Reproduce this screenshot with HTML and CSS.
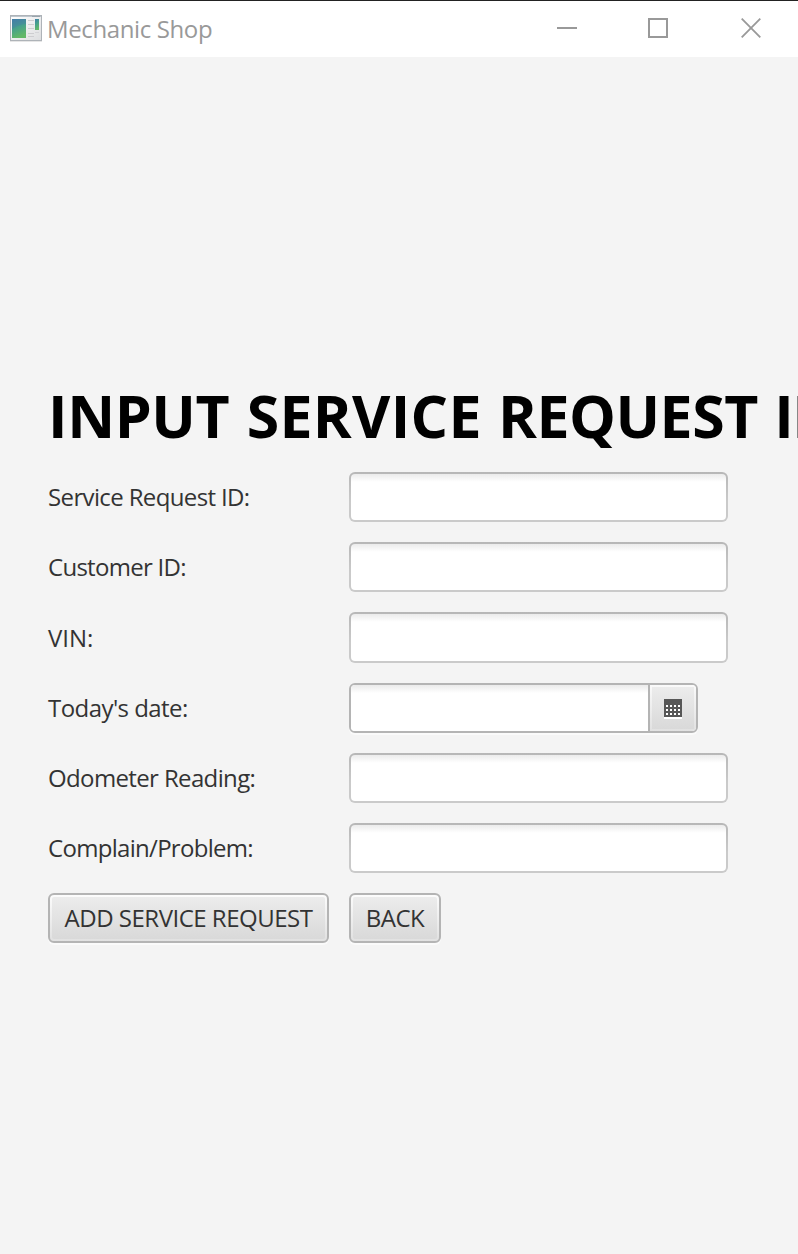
FILE: index.html
```
<!DOCTYPE html>
<html lang="en">
<head>
<meta charset="utf-8">
<title>Mechanic Shop</title>
<link rel="stylesheet" href="styles.css">
</head>
<body>
<div class="window">
  <header class="titlebar">
    <svg class="app-icon" width="32" height="27" viewBox="0 0 32 27">
      <defs>
        <linearGradient id="pane" x1="0" y1="0" x2="0.3" y2="1">
          <stop offset="0" stop-color="#3f7fa8"/><stop offset="0.5" stop-color="#46a08c"/><stop offset="1" stop-color="#62b868"/>
        </linearGradient>
        <linearGradient id="frame" x1="0" y1="0" x2="1" y2="1">
          <stop offset="0" stop-color="#fff"/><stop offset="1" stop-color="#dcdddf"/>
        </linearGradient>
      </defs>
      <rect x="0.5" y="0.5" width="31" height="25" fill="url(#frame)" stroke="#aeb3b8"/>
      <path d="M1 1.5h30" stroke="#bcc5cc"/>
      <path d="M22 1.5h8" stroke="#98a4ad"/>
      <rect x="2" y="4" width="14" height="19" fill="url(#pane)"/>
      <path d="M2 14Q10 9 16 9V4H2z" fill="#4779a8" opacity=".35"/>
      <path d="M18 5.500h6M18 9.500h6M18 13.500h6M18 18.500h6M18 21.500h6" stroke="#cdcdd0"/>
      <rect x="25" y="4" width="4" height="11" fill="url(#pane)"/>
      <path d="M25 17.500h4" stroke="#d4d4d8"/>
      <path d="M0 26.500h32" stroke="#e6e6e6"/>
    </svg>
    <span class="title">Mechanic Shop</span>
    <div class="controls">
      <svg width="20" height="20" viewBox="0 0 20 20"><path d="M0 10h20" stroke="#999" stroke-width="2"/></svg>
      <svg width="20" height="20" viewBox="0 0 20 20"><rect x="1" y="1" width="18" height="18" fill="none" stroke="#999" stroke-width="2"/></svg>
      <svg width="20" height="20" viewBox="0 0 20 20"><path d="M.7.700l18.600 18.600M19.300.700L.7 19.300" stroke="#999" stroke-width="1.800"/></svg>
    </div>
  </header>
  <main class="content">
    <h1 class="heading"><span class="w-input">INPUT</span> <span class="w-service">SERVICE</span> <span class="w-request">REQUEST</span> <span class="w-last">IN</span></h1>
    <form class="form">
      <label class="label l-service" for="sr">Service Request ID:</label><input class="field" id="sr">
      <label class="label l-customer" for="cu">Customer ID:</label><input class="field" id="cu">
      <label class="label l-vin" for="vin">VIN:</label><input class="field" id="vin">
      <label class="label l-date" for="date">Today's date:</label>
      <div class="date">
        <input class="date-input" id="date">
        <button class="date-button" type="button" aria-label="Choose date">
          <svg width="18" height="20" viewBox="0 0 18 20">
            <path d="M0 18h18v2H0z" fill="#fff"/>
            <path d="M0 0h18v18H0z" fill="#575757"/>
            <path d="M2 7h14M2 11h14M2 15h14" stroke="#fff" stroke-width="2" stroke-dasharray="2 2"/>
          </svg>
        </button>
      </div>
      <label class="label l-odometer" for="od">Odometer Reading:</label><input class="field" id="od">
      <label class="label l-problem" for="pr">Complain/Problem:</label><input class="field" id="pr">
      <button class="button add" type="button"><span>ADD SERVICE REQUEST</span></button>
      <button class="button back" type="button"><span>BACK</span></button>
    </form>
  </main>
</div>
</body>
</html>
```
FILE: styles.css
```
* { box-sizing: border-box; }
body { margin: 0; font-family: "Open Sans", "Noto Sans", sans-serif; }
.window { width: 798px; height: 1254px; overflow: hidden; background: #f4f4f4; }
.titlebar {
  display: flex; align-items: center; height: 57px; padding: 0 37px 3px 10px;
  border-top: 1px solid #222; background: #fff;
}
.app-icon { flex: none; margin-top: 2px; }
.title { margin-left: 5px; padding-top: 3px; font-size: 24px; line-height: 32px; color: #999; white-space: nowrap; letter-spacing: -0.38px; }
.controls { display: flex; margin-left: auto; gap: 71px; }
.controls svg { display: block; }
.controls svg:last-child { margin-left: 2px; }
.content { padding: 318px 0 0 48px; }
.heading { margin: 0 0 17px; height: 80px; font-size: 59px; line-height: 80px; font-weight: 700; white-space: nowrap; color: #000; }
.w-input { letter-spacing: -0.4px; margin-right: 2px; }
.w-service { letter-spacing: 0.3px; margin-right: 1px; }
.w-request { letter-spacing: -0.5px; margin-right: 1px; }
.w-last { letter-spacing: -1.5px; }
.form {
  display: grid; grid-template-columns: 281px 379px; column-gap: 20px; row-gap: 20px;
  grid-template-rows: 50px 50px 51px 50px 50px 50px 50px;
}
.label { align-self: center; justify-self: start; font-size: 24px; line-height: 32px; color: #333; white-space: nowrap; }
.l-service { letter-spacing: -0.63px; }
.l-customer { letter-spacing: -0.72px; }
.l-vin { letter-spacing: -0.05px; }
.l-date { letter-spacing: -0.56px; }
.l-odometer { letter-spacing: -0.63px; }
.l-problem { letter-spacing: -0.7px; }
.field, .date-input { font: 24px "Open Sans", sans-serif; color: #333; outline: 0; padding: 0 14px; min-width: 0; }
.field {
  width: 379px; height: 100%; border: 2px solid transparent; border-radius: 6px;
  background: linear-gradient(#ebebeb, #fff 8px) padding-box, linear-gradient(#b7b7b7, #cacaca 60%) border-box;
}
.date {
  display: flex; width: 349px; height: 50px; border: 2px solid #b4b4b4; border-radius: 6px;
  background: #fff; box-shadow: 0 2px 0 #fafafa; overflow: hidden;
}
.date-input { flex: 1; border: 0; background: linear-gradient(#ebebeb, #fff 8px); }
.date-button {
  display: flex; align-items: center; justify-content: center; width: 48px; padding: 2px 0 0;
  border: 0; border-left: 2px solid #b4b4b4;
  background: linear-gradient(#ececec, #d9d9d9) 2px 2px / 42px 42px no-repeat, linear-gradient(#fafafa, #e1e1e1);
}
.button {
  display: flex; align-items: center; justify-content: center; height: 50px; padding: 2px;
  border: 2px solid #b4b4b4; border-radius: 6px; font: 24px/32px "Open Sans", sans-serif; color: #333; white-space: nowrap;
  background: linear-gradient(#ececec, #d9d9d9) content-box, linear-gradient(#fcfcfc, #e1e1e1) padding-box;
  box-shadow: 0 2px 0 #fafafa;
}
.add { width: 281px; letter-spacing: -0.5px; }
.back { width: 92px; letter-spacing: -0.5px; }
```
